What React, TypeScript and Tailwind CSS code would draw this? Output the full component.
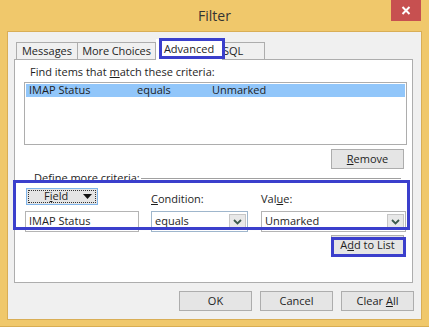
import React from 'react';

const font = { fontFamily: '"Open Sans", "Noto Sans", sans-serif' };

function Btn({ children, className = '' }: { children: React.ReactNode; className?: string }) {
  return (
    <div
      className={`h-[20px] w-[73px] flex items-center justify-center whitespace-nowrap border border-[#adadad] bg-[#e5e5e5] text-[11px] text-[#1e1e1e] ${className}`}
    >
      {children}
    </div>
  );
}

function Chevron() {
  return (
    <svg width="9" height="6" viewBox="0 0 9 6">
      <path d="M1 1 L4.5 4.5 L8 1" fill="none" stroke="#3c5a4c" strokeWidth="1.8" />
    </svg>
  );
}

function Combo({ value, width, blue }: { value: string; width: string; blue?: boolean }) {
  return (
    <div
      className={`h-[21px] ${width} flex items-center border bg-white ${blue ? 'border-[#9fb6cc]' : 'border-[#b4b4b4]'}`}
    >
      <span className="flex-1 pl-[3px] text-[11px] text-[#1e1e1e]">{value}</span>
      <div className="mr-[1px] h-[15px] w-[17px] flex items-center justify-center border border-[#c6c6c6] bg-[#e8e8e8]">
        <Chevron />
      </div>
    </div>
  );
}

export default function App() {
  return (
    <div className="relative w-[429px] h-[327px] bg-[#f0c86b] border-b border-[#d8ad52] overflow-hidden" style={font}>
      {/* Title bar */}
      <div className="relative h-[31px] flex items-center justify-center">
        <span className="text-[14px] text-[#333333] mt-[-1px]">Filter</span>
        <div className="absolute right-[8px] top-0 w-[30px] h-[21px] bg-[#c75050] flex items-center justify-center">
          <svg width="10" height="9" viewBox="0 0 10 9">
            <path d="M1.5 1 L8.5 8 M8.5 1 L1.5 8" stroke="white" strokeWidth="2" />
          </svg>
        </div>
      </div>

      {/* Client area */}
      <div className="mx-[7px] h-[289px] border border-[#d9ae56] bg-[#f0f0f0]">
        {/* Tabs */}
        <div className="flex items-end h-[27px] pl-[8px] whitespace-nowrap">
          <div className="h-[17px] w-[62px] flex items-center justify-center border border-b-0 border-[#adadad] bg-[#f0f0f0] text-[11px] text-[#1e1e1e]">
            Messages
          </div>
          <div className="h-[17px] w-[78px] flex items-center justify-center border border-l-0 border-b-0 border-[#adadad] bg-[#f0f0f0] text-[11px] text-[#1e1e1e] tracking-[-0.1px]">
            More Choices
          </div>
          <div className="h-[21px] w-[66px] mb-[-1px] z-10 flex items-start justify-center pt-[2px] bg-white text-[11px] text-[#1e1e1e]">
            Advanced
          </div>
          <div className="h-[17px] w-[43px] pl-[1px] flex items-center border border-l-0 border-b-0 border-[#adadad] bg-[#f0f0f0] text-[11px] text-[#1e1e1e]">
            SQL
          </div>
        </div>

        {/* Tab panel */}
        <div className="ml-[6px] w-[399px] h-[224px] border border-[#adadad] bg-white text-[11px] text-[#1e1e1e] whitespace-nowrap">
          <div className="pl-[15px] pt-[4px] h-[22px]">
            Find items that <span className="underline">m</span>atch these criteria:
          </div>
          <div className="ml-[9px] w-[383px] h-[63px] border border-[#adadad] p-px">
            <div className="h-[13px] bg-[#91c6fa] flex items-center text-[11px]">
              <span className="w-[111px] pl-[3px]">IMAP Status</span>
              <span className="w-[75px]">equals</span>
              <span>Unmarked</span>
            </div>
          </div>
          <div className="flex justify-end pr-[8px] mt-[4px]">
            <Btn className="h-[19px]">
              <span><span className="underline">R</span>emove</span>
            </Btn>
          </div>
          <div className="flex items-center pl-[19px] pr-[11px] mt-[2px] h-[14px]">
            <span className="shrink-0">Define more criteria:</span>
            <div className="ml-px flex-1 h-px bg-[#a0a0a0] mt-[1px]" />
          </div>

          <div className="flex pl-[10px] mt-[3px]">
            <div className="flex flex-col w-[126px]">
              <div className="ml-px h-[17px] w-[72px] border border-[#7eb4ea] bg-[#e5e5e5] p-px">
                <div className="h-full w-full border border-dotted border-[#333] flex items-center pl-[15px]">
                  <span>F<span className="underline">i</span>eld</span>
                  <svg className="ml-[15px] shrink-0" width="9" height="5" viewBox="0 0 9 5">
                    <path d="M0 0 L9 0 L4.5 5 Z" fill="#111" />
                  </svg>
                </div>
              </div>
              <div className="mt-[6px] h-[21px] w-[114px] border border-[#b4b4b4] bg-white flex items-center pl-[3px]">
                IMAP Status
              </div>
            </div>
            <div className="flex flex-col w-[110px]">
              <div className="h-[17px] mt-[3px] flex items-center">
                <span><span className="underline">C</span>ondition:</span>
              </div>
              <div className="mt-[3px]">
                <Combo value="equals" width="w-[97px]" blue />
              </div>
            </div>
            <div className="flex flex-col">
              <div className="h-[17px] mt-[3px] flex items-center">
                <span>Val<span className="underline">u</span>e:</span>
              </div>
              <div className="mt-[3px]">
                <Combo value="Unmarked" width="w-[145px]" />
              </div>
            </div>
          </div>

          <div className="flex justify-end pr-[8px] mt-[3px]">
            <Btn className="h-[19px]">
              <span>A<span className="underline">d</span>d to List</span>
            </Btn>
          </div>
        </div>

        {/* Bottom buttons */}
        <div className="flex justify-end gap-[8px] pr-[7px] mt-[8px]">
          <Btn>OK</Btn>
          <Btn>Cancel</Btn>
          <Btn>
            <span>Clear <span className="underline">A</span>ll</span>
          </Btn>
        </div>
      </div>

      {/* Highlight annotations */}
      <div className="absolute left-[159px] top-[38px] w-[66px] h-[21px] border-[3px] border-[#3b3fcc] z-20" />
      <div className="absolute left-[13px] top-[180px] w-[397px] h-[50px] border-[3px] border-[#3b3fcc] z-20" />
      <div className="absolute left-[331px] top-[237px] w-[75px] h-[20px] border-[3px] border-[#3b3fcc] z-20" />
    </div>
  );
}
